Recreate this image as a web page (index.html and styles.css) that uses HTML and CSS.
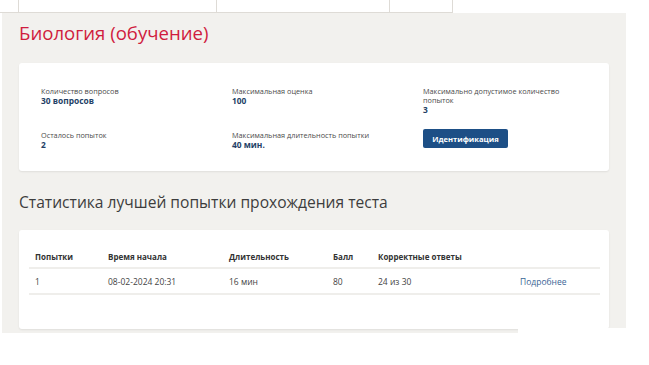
FILE: index.html
```html
<!DOCTYPE html>
<html>
<head>
    <title>Биология (обучение)</title>
    <link rel="stylesheet" href="styles.css">
</head>
<body>
    <div class="topbar">
        <div class="tab tab-first"></div>
        <div class="tab tab-wide"></div>
        <div class="tab tab-mid"></div>
        <div class="tab tab-small"></div>
    </div>

    <div class="page">
        <h1 class="page-title">Биология (обучение)</h1>

        <!-- Test info -->
        <div class="card info-card">
            <div class="info-grid">
                <div class="info-item">
                    <div class="info-label">Количество вопросов</div>
                    <div class="info-value">30 вопросов</div>
                </div>
                <div class="info-item">
                    <div class="info-label">Максимальная оценка</div>
                    <div class="info-value">100</div>
                </div>
                <div class="info-item info-narrow">
                    <div class="info-label">Максимально допустимое количество попыток</div>
                    <div class="info-value">3</div>
                </div>
                <div class="info-item info-low">
                    <div class="info-label">Осталось попыток</div>
                    <div class="info-value">2</div>
                </div>
                <div class="info-item info-low">
                    <div class="info-label">Максимальная длительность попытки</div>
                    <div class="info-value">40 мин.</div>
                </div>
                <div class="info-item">
                    <button class="ident-button">Идентификация</button>
                </div>
            </div>
        </div>

        <h2 class="section-title">Статистика лучшей попытки прохождения теста</h2>

        <!-- Best attempt stats -->
        <div class="card stats-card">
            <table class="stats-table">
                <thead>
                    <tr>
                        <th class="col-attempt">Попытки</th>
                        <th class="col-start">Время начала</th>
                        <th class="col-duration">Длительность</th>
                        <th class="col-score">Балл</th>
                        <th class="col-correct">Корректные ответы</th>
                        <th class="col-link"></th>
                    </tr>
                </thead>
                <tbody>
                    <tr>
                        <td>1</td>
                        <td>08-02-2024 20:31</td>
                        <td>16 мин</td>
                        <td>80</td>
                        <td>24 из 30</td>
                        <td><a href="#" class="details-link">Подробнее</a></td>
                    </tr>
                </tbody>
            </table>
        </div>
    </div>

    <div class="crop-patch"></div>
</body>
</html>
```

FILE: styles.css
```css
* {
    margin: 0px;
    padding: 0px;
    box-sizing: border-box;
}

body {
    background-color: #ffffff;
    font-family: 'Open Sans', 'Noto Sans', sans-serif;
    position: relative;
}

.topbar {
    display: flex;
    width: 453px;
    height: 13px;
    border-bottom: 1px solid #dedbd6;
}

.tab {
    height: 12px;
    border-right: 1px solid #dedbd6;
}

.tab-first { width: 19px; }
.tab-wide { width: 198px; }
.tab-mid { width: 173px; }
.tab-small { width: 63px; }

.page {
    margin-left: 2px;
    width: 624px;
    background-color: #f2f1ee;
    padding: 8px 17px 4px 17px;
}

.page-title {
    font-size: 18.6px;
    line-height: 24px;
    font-weight: 500;
    color: #d01c3e;
    margin-bottom: 18px;
}

.card {
    background-color: #ffffff;
    border-radius: 3px;
    box-shadow: 0 1px 2px rgba(0, 0, 0, 0.08);
}

.info-card {
    height: 108px;
    padding: 24px 22px 0 22px;
}

.info-grid {
    display: grid;
    grid-template-columns: 191px 191px 150px;
    row-gap: 14px;
}

.info-low {
    padding-top: 2px;
}

.info-label {
    font-size: 7.3px;
    line-height: 9px;
    color: #4a4a4a;
}

.info-narrow .info-label {
    max-width: 145px;
}

.info-value {
    font-size: 8.4px;
    line-height: 10px;
    font-weight: 700;
    color: #243f66;
}

.ident-button {
    display: block;
    font-family: inherit;
    font-size: 7.6px;
    font-weight: 700;
    color: #ffffff;
    background-color: #1d4f86;
    border: none;
    border-radius: 2px;
    width: 85px;
    height: 19px;
    cursor: pointer;
}

.section-title {
    font-size: 15.6px;
    line-height: 22px;
    font-weight: 400;
    color: #3d3d3d;
    margin: 20px 0 17px 0;
}

.stats-card {
    height: 99px;
    padding: 16px 9px 0 10px;
}

.stats-table {
    width: 100%;
    border-collapse: collapse;
    font-size: 8.5px;
    color: #444444;
}

.stats-table th {
    text-align: left;
    font-size: 8px;
    font-weight: 700;
    color: #333333;
    height: 22px;
    padding-left: 6px;
    border-bottom: 2px solid #efeeeb;
}

.stats-table td {
    height: 26px;
    padding-left: 6px;
    border-bottom: 2px solid #efeeeb;
}

.col-attempt { width: 73px; }
.col-start { width: 121px; }
.col-duration { width: 104px; }
.col-score { width: 45px; }
.col-correct { width: 142px; }

.details-link {
    color: #3a6596;
    text-decoration: none;
}

/* white patch from the screenshot's cropping, lies over the panel corner */
.crop-patch {
    position: absolute;
    left: 518px;
    top: 328px;
    width: 112px;
    height: 8px;
    background-color: #ffffff;
}
```
